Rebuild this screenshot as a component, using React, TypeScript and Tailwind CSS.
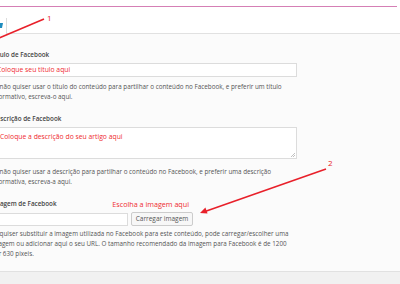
export default function App() {
  return (
    <div className="relative w-[400px] h-[284px] overflow-hidden bg-white font-['Open_Sans',sans-serif] text-[#555]">
      {/* top bar */}
      <div className="h-[6px]" />
      <div className="h-px bg-[#d57fb5] mr-[3px]" />

      {/* tabs row */}
      <div className="flex h-[27px] items-end">
        <div className="relative h-[16px] w-[7px] border-r border-[#dcdcdc] bg-white">
          <svg className="absolute left-0 top-[5px]" width="4" height="6" viewBox="0 0 4 6">
            <path d="M0 0 H3 L2 5 H0 Z" fill="#1e8cbe" />
          </svg>
        </div>
        <div className="h-px flex-1 bg-[#e1e1e1]" />
      </div>

      {/* meta box content */}
      <div className="h-[237px] bg-[#fbfbfb] pt-[16px]">
        <div className="ml-[-10px] flex flex-col">
          {/* título */}
          <div className="ml-[2px] h-[10px] text-[6.3px] leading-[10px] font-semibold text-[#444]">Título de Facebook</div>
          <div className="mt-[3px] flex h-[14px] w-[307px] items-center border border-[#dcdcdc] bg-white pl-[6px] text-[6.8px] text-[#ef2b2f]">
            Coloque seu titulo aqui
          </div>
          <div className="ml-[1px] mt-[5px] text-[6.3px] leading-[10px] whitespace-nowrap">
            <div>Se não quiser usar o título do conteúdo para partilhar o conteúdo no Facebook, e preferir um título</div>
            <div>informativo, escreva-o aqui.</div>
          </div>

          {/* descrição */}
          <div className="ml-[2px] mt-[12px] h-[10px] text-[6.3px] leading-[10px] font-semibold text-[#444]">Descrição de Facebook</div>
          <div className="relative mt-[3px] h-[32px] w-[307px] border border-[#dcdcdc] bg-white pl-[9px] pt-[4px] text-[6.8px] leading-[10px] text-[#ef2b2f]">
            Coloque a descrição do seu artigo aqui
            <svg className="absolute bottom-[1px] right-[1px]" width="4" height="4" viewBox="0 0 4 4">
              <path d="M4 0 L0 4 M4 2 L2 4" stroke="#999" strokeWidth="0.6" />
            </svg>
          </div>
          <div className="ml-[1px] mt-[8px] text-[6.3px] leading-[10px] whitespace-nowrap">
            <div>Se não quiser usar a descrição para partilhar o conteúdo no Facebook, e preferir uma descrição</div>
            <div>informativa, escreva-a aqui.</div>
          </div>

          {/* imagem */}
          <div className="mt-[12px] flex h-[10px] w-[203px] items-center justify-between pr-[4px]">
            <span className="ml-[2px] text-[6.3px] leading-[10px] font-semibold text-[#444]">Imagem de Facebook</span>
            <span className="text-[7.2px] leading-[10px] text-[#ef2b2f]">Escolha a imagem aqui</span>
          </div>
          <div className="mt-[3px] flex h-[14px] items-center gap-[3px]">
            <div className="h-[13px] w-[138px] border border-[#dcdcdc] bg-white" />
            <button className="h-[14px] w-[62px] rounded-[2px] border border-[#ccc] bg-[#f7f7f7] text-[6.5px] leading-[12px] text-[#555]">
              Carregar imagem
            </button>
          </div>
          <div className="ml-[1px] mt-[3px] text-[6.3px] leading-[10px] whitespace-nowrap">
            <div>Se quiser substituir a imagem utilizada no Facebook para este conteúdo, pode carregar/escolher uma</div>
            <div>imagem ou adicionar aqui o seu URL. O tamanho recomendado da imagem para Facebook é de 1200</div>
            <div>por 630 pixeis.</div>
          </div>
        </div>
      </div>

      {/* footer */}
      <div className="h-[13px] border-t border-[#e1e1e1] bg-[#f1f1f1]" />

      {/* annotations */}
      <svg className="pointer-events-none absolute inset-0" width="400" height="284" viewBox="0 0 400 284">
        <line x1="44" y1="19" x2="-10" y2="42" stroke="#e8202a" strokeWidth="1.6" />
        <line x1="326" y1="169" x2="205" y2="211.5" stroke="#e8202a" strokeWidth="1.6" />
        <path d="M200 213 L207.6 213.6 L205.4 207.6 Z" fill="#e8202a" />
      </svg>
      <span className="absolute left-[47px] top-[13px] text-[8px] leading-[10px] text-[#e8202a]">1</span>
      <span className="absolute left-[328px] top-[158px] text-[8px] leading-[10px] text-[#e8202a]">2</span>
    </div>
  );
}
